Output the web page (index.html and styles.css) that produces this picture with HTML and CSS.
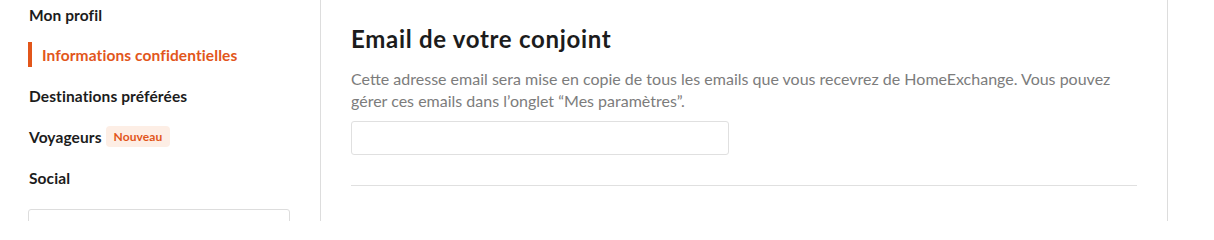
FILE: index.html
```html
<!DOCTYPE html>
<html lang="fr">
<head>
<meta charset="utf-8">
<title>Informations confidentielles</title>
<link rel="stylesheet" href="styles.css">
</head>
<body>
<div class="page">
  <aside class="sidebar">
    <nav class="nav">
      <a class="nav-item">Mon profil</a>
      <a class="nav-item active">Informations confidentielles</a>
      <a class="nav-item">Destinations préférées</a>
      <a class="nav-item">Voyageurs <span class="badge">Nouveau</span></a>
      <a class="nav-item">Social</a>
    </nav>
    <div class="side-box"></div>
  </aside>
  <main class="content">
    <h2 class="title">Email de votre conjoint</h2>
    <p class="desc">Cette adresse email sera mise en copie de tous les emails que vous recevrez de HomeExchange. Vous pouvez gérer ces emails dans l’onglet “Mes paramètres”.</p>
    <input class="field" type="email">
    <hr class="rule">
  </main>
</div>
</body>
</html>
```

FILE: styles.css
```css
html, body {
  margin: 0;
  padding: 0;
  background: #fff;
  font-family: "Lato", "Noto Sans", sans-serif;
  color: #1c1c1c;
  overflow: hidden;
}
.page {
  display: flex;
  align-items: stretch;
  width: 1168px;
  height: 221px;
}
.sidebar {
  width: 321px;
  flex-shrink: 0;
  box-sizing: border-box;
  padding-left: 28px;
  padding-right: 30px;
  border-right: 1px solid #dddddd;
}
.nav {
  display: flex;
  flex-direction: column;
  margin-top: -6px;
}
.nav-item {
  display: flex;
  align-items: center;
  gap: 4px;
  height: 41px;
  font-size: 15.5px;
  font-weight: 700;
  letter-spacing: 0.1px;
  color: #1c1c1c;
  padding-left: 1px;
}
.nav-item.active {
  color: #e2561b;
  padding-left: 10px;
  border-left: 4px solid #e2561b;
  height: 25px;
  margin: 7px 0 8px;
}
.badge {
  display: inline-block;
  background: #fdeee5;
  color: #e2561b;
  font-size: 12px;
  font-weight: 700;
  padding: 0 8px;
  line-height: 21px;
  border-radius: 4px;
}
.side-box {
  margin-top: 11px;
  height: 40px;
  border: 1px solid #dddddd;
  border-radius: 3px;
}
.content {
  width: 847px;
  flex-shrink: 0;
  box-sizing: border-box;
  padding: 22px 30px 0 30px;
  border-right: 1px solid #dddddd;
}
.title {
  margin: 0;
  font-size: 24px;
  font-weight: 700;
  letter-spacing: 0.7px;
  line-height: 34px;
  color: #1c1c1c;
}
.desc {
  margin: 12px 0 0 0;
  font-size: 16px;
  line-height: 22px;
  color: #7c7c7c;
  max-width: 760px;
}
.field {
  display: block;
  margin-top: 9px;
  width: 378px;
  height: 34px;
  box-sizing: border-box;
  border: 1px solid #e0e0e0;
  border-radius: 3px;
  background: #fff;
}
.rule {
  margin: 30px 0 0 0;
  border: 0;
  border-top: 1px solid #e0e0e0;
}
```
